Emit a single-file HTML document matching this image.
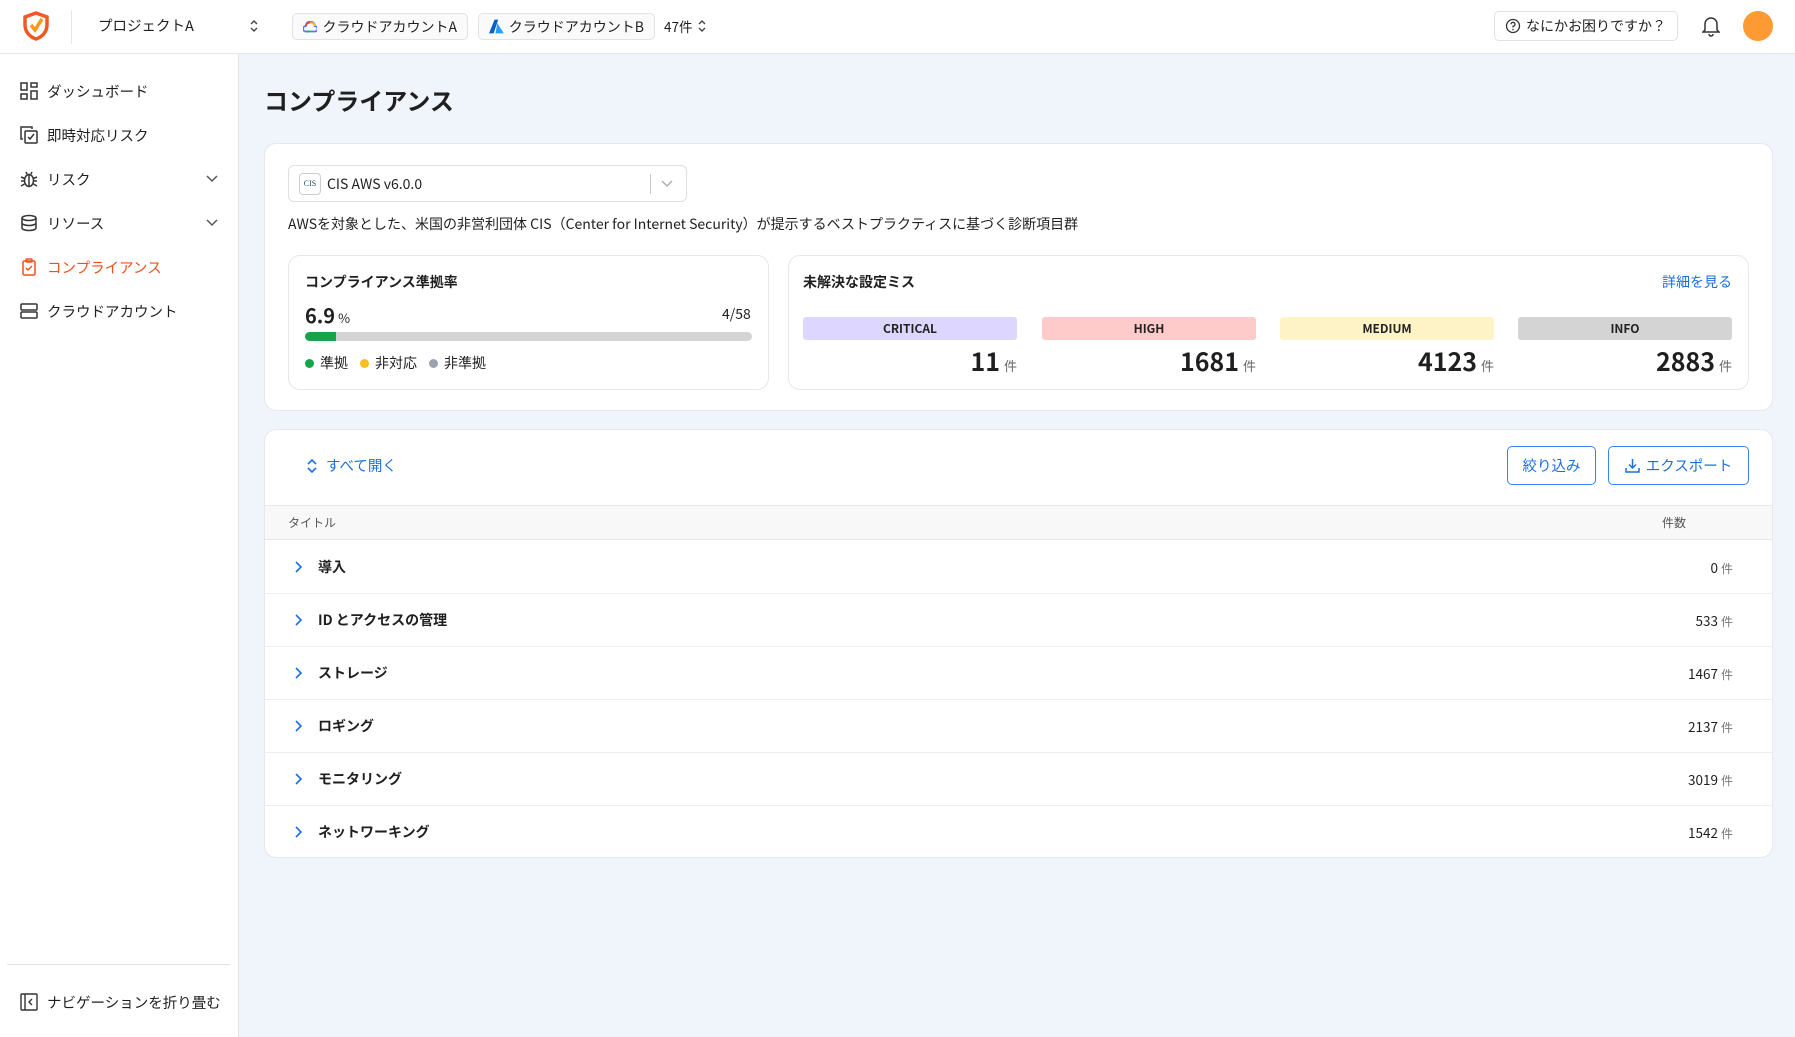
<!DOCTYPE html>
<html><head><meta charset="utf-8"><style>
*{box-sizing:border-box;margin:0;padding:0}
body{width:1795px;height:1037px;overflow:hidden;background:#f0f4fb;font-family:"Noto Sans CJK JP","Liberation Sans",sans-serif;color:#1f1f1f;font-size:14px;position:relative}
.abs{position:absolute;white-space:nowrap}
.hdr{left:0;top:0;width:1795px;height:54px;background:#fff;border-bottom:1px solid #e3e5ea}
.side{left:0;top:54px;width:239px;height:983px;background:#fff;border-right:1px solid #e3e5ea}
.chip{height:27px;border:1px solid #e2e2e2;border-radius:5px;background:#fafafa;display:flex;align-items:center;padding:0 10px;gap:5px;font-size:14px;line-height:1}
.nav{left:20px;display:flex;align-items:center;gap:9px;font-size:14.5px;height:24px}
.card{background:#fff;border:1px solid #e4e7ec;border-radius:12px}
.badge{height:23px;border-radius:3px;font-size:12px;font-weight:bold;display:flex;align-items:center;justify-content:center;color:#222}
.cnt{font-size:25px;font-weight:bold;text-align:right;line-height:1.2}
.cnt span{font-size:13px;color:#666;font-weight:normal;margin-left:4px}
.row{left:264px;width:1509px;height:53px;border-top:1px solid #eceff2;display:flex;align-items:center;font-size:14px;font-weight:bold}
.row .c{position:absolute;right:40px;font-weight:normal;font-size:13.5px}
.row .c small{font-size:12px;color:#777;margin-left:3px}
.btn{height:39px;border:1.5px solid #3b82f6;border-radius:5px;color:#1a6fe0;display:flex;align-items:center;justify-content:center;gap:6px;font-size:14.5px;background:#fff}
</style></head><body>
<div class="abs hdr"></div>
<svg class="abs" style="left:22px;top:11px" width="28" height="30" viewBox="0 0 28 30"><path d="M14 2 L25 6 V14 C25 21 20 26 14 28 C8 26 3 21 3 14 V6 Z" fill="none" stroke="#f05a22" stroke-width="3.5"/><path d="M9 14 L13 19 L20 8" fill="none" stroke="#f89a1c" stroke-width="3.5"/></svg>
<div class="abs" style="left:71px;top:10px;width:1px;height:34px;background:#e6e6e6"></div>
<div class="abs" style="left:98px;top:15px;font-size:14.5px">プロジェクトA</div>
<svg class="abs" style="left:249px;top:18px" width="10" height="16" viewBox="0 0 10 16"><path d="M2 6 L5 3 L8 6 M2 10 L5 13 L8 10" fill="none" stroke="#444" stroke-width="1.4"/></svg>
<div class="abs chip" style="left:292px;top:13px;width:176px"><svg width="16" height="12" viewBox="0 0 16 12"><path d="M3 11 A3 3 0 0 1 3 5 A5 5 0 0 1 13 5 A3 3 0 0 1 13 11 Z" fill="none" stroke="#4285f4" stroke-width="2"/><path d="M3 5 A5 5 0 0 1 8 1" stroke="#ea4335" stroke-width="2" fill="none"/><path d="M8 1 A5 5 0 0 1 13 5" stroke="#fbbc05" stroke-width="2" fill="none"/><path d="M3 11 H8" stroke="#34a853" stroke-width="2"/></svg>クラウドアカウントA</div>
<div class="abs chip" style="left:478px;top:13px;width:177px"><svg width="16" height="15" viewBox="0 0 16 15"><path d="M6 0 H10 L5 15 H0 Z" fill="#0a5ec7"/><path d="M9 4 L16 15 H7 Z" fill="#2d9bf0"/></svg>クラウドアカウントB</div>
<div class="abs" style="left:664px;top:16px;font-size:13.5px;display:flex;align-items:center;gap:4px">47件<svg width="10" height="16" viewBox="0 0 10 16"><path d="M2 6 L5 3 L8 6 M2 10 L5 13 L8 10" fill="none" stroke="#444" stroke-width="1.4"/></svg></div>
<div class="abs chip" style="left:1494px;top:11px;width:184px;height:30px;background:#fff;padding-left:10px"><svg width="16" height="16" viewBox="0 0 16 16"><circle cx="8" cy="8" r="6.5" fill="none" stroke="#333" stroke-width="1.3"/><path d="M6 6.3 A2 2 0 1 1 8 8.3 V9.5" fill="none" stroke="#333" stroke-width="1.3"/><circle cx="8" cy="11.5" r=".8" fill="#333"/></svg>なにかお困りですか？</div>
<svg class="abs" style="left:1702px;top:15px" width="18" height="22" viewBox="0 0 18 22"><path d="M3 15 V9 A6 6 0 0 1 15 9 V15 L17 17 H1 Z" fill="none" stroke="#333" stroke-width="1.5"/><path d="M7 19 A2 2 0 0 0 11 19" fill="none" stroke="#333" stroke-width="1.5"/></svg>
<div class="abs" style="left:1743px;top:11px;width:30px;height:30px;border-radius:50%;background:#fd9a33"></div>

<div class="abs side"></div>
<div class="abs nav" style="top:79px"><svg width="18" height="18" viewBox="0 0 18 18" fill="none" stroke="#333" stroke-width="1.5"><rect x="1" y="1" width="6" height="7"/><rect x="11" y="1" width="6" height="4"/><rect x="1" y="12" width="6" height="5"/><rect x="11" y="9" width="6" height="8"/></svg>ダッシュボード</div>
<div class="abs nav" style="top:123px"><svg width="18" height="18" viewBox="0 0 18 18" fill="none" stroke="#333" stroke-width="1.5"><path d="M3 13 H1 V1 H12 V3"/><rect x="5" y="5" width="12" height="12" rx="1"/><path d="M8 11 L10 13 L14 8"/></svg>即時対応リスク</div>
<div class="abs nav" style="top:167px"><svg width="18" height="18" viewBox="0 0 18 18" fill="none" stroke="#333" stroke-width="1.5"><ellipse cx="9" cy="10.5" rx="4.5" ry="6"/><path d="M9 5 V17 M1 7 L4.5 8.5 M17 7 L13.5 8.5 M1 11 H4.5 M17 11 H13.5 M1 16 L4.5 14 M17 16 L13.5 14 M6 2 L7 4 M12 2 L11 4"/></svg>リスク</div>
<div class="abs nav" style="top:211px"><svg width="18" height="18" viewBox="0 0 18 18" fill="none" stroke="#333" stroke-width="1.5"><ellipse cx="9" cy="4" rx="7" ry="2.5"/><path d="M2 4 V14 A7 2.5 0 0 0 16 14 V4 M2 9 A7 2.5 0 0 0 16 9"/></svg>リソース</div>
<div class="abs nav" style="top:255px;color:#f0501e"><svg width="18" height="18" viewBox="0 0 18 18" fill="none" stroke="#f0501e" stroke-width="1.5"><rect x="3" y="3" width="12" height="14" rx="1.5"/><rect x="6" y="1" width="6" height="3" rx="1"/><path d="M6 10 L8 12 L12 8"/></svg>コンプライアンス</div>
<div class="abs nav" style="top:299px"><svg width="18" height="18" viewBox="0 0 18 18" fill="none" stroke="#333" stroke-width="1.5"><rect x="1" y="2" width="16" height="6" rx="1"/><rect x="1" y="10" width="16" height="6" rx="1"/></svg>クラウドアカウント</div>
<svg class="abs" style="left:205px;top:174px" width="14" height="10" viewBox="0 0 14 10"><path d="M2 2 L7 7 L12 2" fill="none" stroke="#555" stroke-width="1.5"/></svg>
<svg class="abs" style="left:205px;top:218px" width="14" height="10" viewBox="0 0 14 10"><path d="M2 2 L7 7 L12 2" fill="none" stroke="#555" stroke-width="1.5"/></svg>
<div class="abs" style="left:7px;top:964px;width:223px;height:1px;background:#e3e3e3"></div>
<div class="abs nav" style="top:990px"><svg width="18" height="18" viewBox="0 0 18 18" fill="none" stroke="#333" stroke-width="1.4"><rect x="1" y="1" width="16" height="16" rx="1"/><path d="M5 1 V17 M12 6 L9 9 L12 12"/></svg>ナビゲーションを折り畳む</div>

<div class="abs" style="left:264px;top:82px;font-size:24px;font-weight:bold">コンプライアンス</div>

<div class="abs card" style="left:264px;top:143px;width:1509px;height:268px"></div>
<div class="abs" style="left:288px;top:165px;width:399px;height:37px;border:1px solid #dcdfe4;border-radius:6px;display:flex;align-items:center;padding-left:10px;gap:6px;font-size:14px"><div style="width:22px;height:22px;border:1px solid #ccc;border-radius:4px;font-size:8px;font-family:'Liberation Serif',serif;display:flex;align-items:center;justify-content:center;color:#1d4f66">CIS</div>CIS AWS v6.0.0<div style="position:absolute;left:361px;top:8px;width:1px;height:20px;background:#ccc"></div><svg style="position:absolute;left:372px;top:13px" width="12" height="9" viewBox="0 0 12 9"><path d="M1 2 L6 7 L11 2" fill="none" stroke="#aaa" stroke-width="1.4"/></svg></div>
<div class="abs" style="left:288px;top:214px;font-size:14px">AWSを対象とした、米国の非営利団体 CIS（Center for Internet Security）が提示するベストプラクティスに基づく診断項目群</div>

<div class="abs card" style="left:288px;top:255px;width:481px;height:135px"></div>
<div class="abs" style="left:305px;top:272px;font-size:14px;font-weight:bold">コンプライアンス準拠率</div>
<div class="abs" style="left:305px;top:300px;font-size:20px;font-weight:bold">6.9<span style="font-size:13px;font-weight:normal;margin-left:3px">%</span></div>
<div class="abs" style="left:722px;top:304px;font-size:14px">4/58</div>
<div class="abs" style="left:305px;top:332px;width:447px;height:9px;border-radius:5px;background:#d4d4d4"><div style="width:31px;height:9px;border-radius:5px 0 0 5px;background:#16a34a"></div></div>
<div class="abs" style="left:305px;top:353px;font-size:14px;display:flex;align-items:center;gap:6px"><i style="width:9px;height:9px;border-radius:50%;background:#16a34a"></i>準拠<i style="width:9px;height:9px;border-radius:50%;background:#fbbf24;margin-left:6px"></i>非対応<i style="width:9px;height:9px;border-radius:50%;background:#9ca3af;margin-left:6px"></i>非準拠</div>

<div class="abs card" style="left:788px;top:255px;width:961px;height:135px"></div>
<div class="abs" style="left:803px;top:272px;font-size:14px;font-weight:bold">未解決な設定ミス</div>
<div class="abs" style="left:1662px;top:272px;font-size:14px;color:#1a6fe0">詳細を見る</div>
<div class="abs badge" style="left:803px;top:317px;width:214px;background:#ddd6fe">CRITICAL</div>
<div class="abs badge" style="left:1042px;top:317px;width:214px;background:#fecaca">HIGH</div>
<div class="abs badge" style="left:1280px;top:317px;width:214px;background:#fef3c7">MEDIUM</div>
<div class="abs badge" style="left:1518px;top:317px;width:214px;background:#d4d4d4">INFO</div>
<div class="abs cnt" style="left:803px;top:346px;width:214px">11<span>件</span></div>
<div class="abs cnt" style="left:1042px;top:346px;width:214px">1681<span>件</span></div>
<div class="abs cnt" style="left:1280px;top:346px;width:214px">4123<span>件</span></div>
<div class="abs cnt" style="left:1518px;top:346px;width:214px">2883<span>件</span></div>

<div class="abs card" style="left:264px;top:429px;width:1509px;height:429px;overflow:hidden"></div>
<div class="abs" style="left:306px;top:455px;font-size:14.5px;color:#1a6fe0;display:flex;align-items:center;gap:8px"><svg width="12" height="16" viewBox="0 0 12 16"><path d="M2 6 L6 2 L10 6 M2 10 L6 14 L10 10" fill="none" stroke="#1a6fe0" stroke-width="1.6"/></svg>すべて開く</div>
<div class="abs btn" style="left:1507px;top:446px;width:89px">絞り込み</div>
<div class="abs btn" style="left:1608px;top:446px;width:141px"><svg width="15" height="15" viewBox="0 0 15 15" fill="none" stroke="#1a6fe0" stroke-width="1.5"><path d="M7.5 1 V10 M4 6.5 L7.5 10 L11 6.5 M1 10 V14 H14 V10"/></svg>エクスポート</div>
<div class="abs" style="left:265px;top:505px;width:1507px;height:35px;background:#f8f8f8;border-top:1px solid #e8e8e8;border-bottom:1px solid #e8e8e8"></div>
<div class="abs" style="left:288px;top:514px;font-size:12px;color:#555">タイトル</div>
<div class="abs" style="left:1662px;top:514px;font-size:12px;color:#555">件数</div>
<div class="abs row" style="top:540px;border-top:none"><svg style="margin-left:30px;margin-right:14px" width="10" height="14" viewBox="0 0 10 14"><path d="M2 2 L7 7 L2 12" fill="none" stroke="#1a6fe0" stroke-width="1.6"/></svg>導入<span class="c">0<small>件</small></span></div>
<div class="abs row" style="top:593px"><svg style="margin-left:30px;margin-right:14px" width="10" height="14" viewBox="0 0 10 14"><path d="M2 2 L7 7 L2 12" fill="none" stroke="#1a6fe0" stroke-width="1.6"/></svg>ID とアクセスの管理<span class="c">533<small>件</small></span></div>
<div class="abs row" style="top:646px"><svg style="margin-left:30px;margin-right:14px" width="10" height="14" viewBox="0 0 10 14"><path d="M2 2 L7 7 L2 12" fill="none" stroke="#1a6fe0" stroke-width="1.6"/></svg>ストレージ<span class="c">1467<small>件</small></span></div>
<div class="abs row" style="top:699px"><svg style="margin-left:30px;margin-right:14px" width="10" height="14" viewBox="0 0 10 14"><path d="M2 2 L7 7 L2 12" fill="none" stroke="#1a6fe0" stroke-width="1.6"/></svg>ロギング<span class="c">2137<small>件</small></span></div>
<div class="abs row" style="top:752px"><svg style="margin-left:30px;margin-right:14px" width="10" height="14" viewBox="0 0 10 14"><path d="M2 2 L7 7 L2 12" fill="none" stroke="#1a6fe0" stroke-width="1.6"/></svg>モニタリング<span class="c">3019<small>件</small></span></div>
<div class="abs row" style="top:805px"><svg style="margin-left:30px;margin-right:14px" width="10" height="14" viewBox="0 0 10 14"><path d="M2 2 L7 7 L2 12" fill="none" stroke="#1a6fe0" stroke-width="1.6"/></svg>ネットワーキング<span class="c">1542<small>件</small></span></div>
</body></html>
